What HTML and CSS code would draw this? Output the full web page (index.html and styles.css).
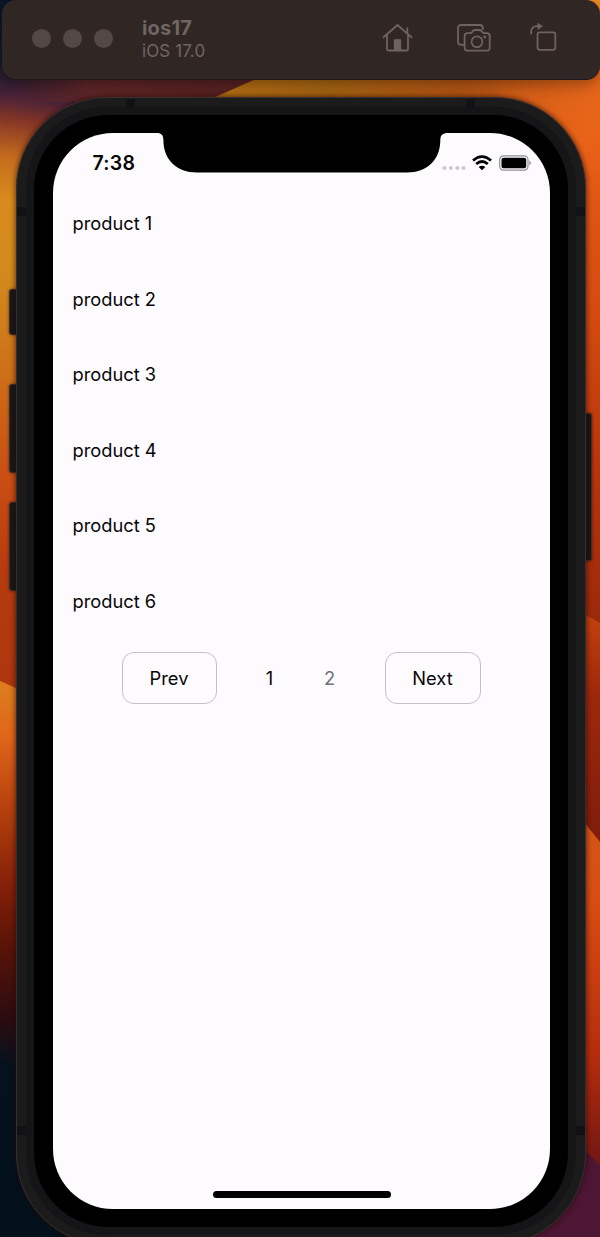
FILE: index.html
```html
<!DOCTYPE html>
<html lang="en">
<head>
<meta charset="utf-8">
<title>ios17</title>
<link rel="stylesheet" href="styles.css">
</head>
<body>
<div class="desktop">
  <svg class="wallpaper" viewBox="0 0 600 1237" preserveAspectRatio="none" aria-hidden="true">
    <defs>
      <linearGradient id="left" gradientUnits="userSpaceOnUse" x1="0" y1="0" x2="-90" y2="700">
        <stop offset="0" stop-color="#07162a"/><stop offset=".09" stop-color="#171b2c"/><stop offset=".13" stop-color="#42203a"/><stop offset=".165" stop-color="#833426"/><stop offset=".22" stop-color="#c56c1d"/><stop offset=".28" stop-color="#d98b1d"/><stop offset=".38" stop-color="#d38a1d"/><stop offset=".52" stop-color="#cd7018"/><stop offset=".67" stop-color="#ca4e14"/><stop offset=".8" stop-color="#b53b0e"/><stop offset="1" stop-color="#ad350f"/>
      </linearGradient>
      <linearGradient id="lower" gradientUnits="userSpaceOnUse" x1="0" y1="670" x2="0" y2="1237">
        <stop offset="0" stop-color="#dc831e"/><stop offset=".12" stop-color="#df651a"/><stop offset=".25" stop-color="#b43f0e"/><stop offset=".38" stop-color="#842008"/><stop offset=".5" stop-color="#551208"/><stop offset=".62" stop-color="#290c12"/><stop offset=".7" stop-color="#03121c"/><stop offset="1" stop-color="#02111c"/>
      </linearGradient>
      <linearGradient id="top" x1="0" y1="0" x2="1" y2="0">
        <stop offset="0" stop-color="#5e2526" stop-opacity="0"/><stop offset=".35" stop-color="#5e2526"/><stop offset="1" stop-color="#552020"/>
      </linearGradient>
      <linearGradient id="gold" x1="0" y1="0" x2="1" y2="0">
        <stop offset="0" stop-color="#b56f13"/><stop offset=".3" stop-color="#a66311"/><stop offset=".65" stop-color="#b35313"/><stop offset="1" stop-color="#e8661a"/>
      </linearGradient>
      <linearGradient id="right" gradientUnits="userSpaceOnUse" x1="0" y1="0" x2="0" y2="640">
        <stop offset="0" stop-color="#f08a20"/><stop offset=".13" stop-color="#e8661a" stop-opacity="0"/><stop offset=".22" stop-color="#e96217"/><stop offset=".34" stop-color="#dd5414"/><stop offset=".5" stop-color="#d34a10"/><stop offset=".72" stop-color="#b8360d"/><stop offset="1" stop-color="#98280b"/>
      </linearGradient>
      <linearGradient id="red" x1="0" y1="0" x2="0" y2="1">
        <stop offset="0" stop-color="#c4420e"/><stop offset=".35" stop-color="#9d280b"/><stop offset="1" stop-color="#7c1c0d"/>
      </linearGradient>
      <linearGradient id="ember" x1="0" y1="0" x2="0" y2="1">
        <stop offset="0" stop-color="#d45716"/><stop offset=".25" stop-color="#d84c12"/><stop offset=".7" stop-color="#b22b0d"/><stop offset="1" stop-color="#6e1714"/>
      </linearGradient>
    </defs>
    <path d="M0 0H300V720H0Z" fill="url(#left)"/>
    <path d="M0 79H260L210 102H0Z" fill="url(#top)"/>
    <path d="M0 681L18 689V1237H0Z" fill="url(#lower)"/>
    <path d="M256 79L400 0H600V230H300L213 98Z" fill="url(#gold)"/>
    <path d="M500 0H600V625L580 612V230H500Z" fill="url(#right)"/>
    <path d="M580 612L600 623V850L580 820Z" fill="url(#red)"/>
    <path d="M580 817L600 842V1167L580 1145Z" fill="url(#ember)"/>
    <path d="M580 1145L600 1166V1237H500Z" fill="#4d1634"/>
    <path d="M0 1100H200V1237H0Z" fill="#02111c"/>
  </svg>

  <header class="toolbar">
    <div class="lights"><i></i><i></i><i></i></div>
    <div class="device-name"><strong>ios17</strong><span>iOS 17.0</span></div>
    <nav class="tools">
      <svg width="32" height="30" viewBox="0 0 32 30">
        <path d="M1.500 14.300L15.500 2L29.500 14.300M5 12.200V26Q5 27.500 6.500 27.500H24.500Q26 27.500 26 26V12.200M25.300 9.500V5.200"/>
        <path class="solid" d="M12 27.500V17.200Q12 16.200 13 16.200H18Q19 16.200 19 17.200V27.500Z"/>
      </svg>
      <svg width="34" height="30" viewBox="0 0 34 30">
        <path d="M6.800 21.800H4Q1 21.800 1 18.800V5Q1 2 4 2H22.800Q25.800 2 25.800 5V6"/>
        <path d="M10.500 10.200H13.200Q14.500 10.200 15.200 9L16 7.800Q16.700 7 18 7H22.500Q23.800 7 24.500 7.800L25.300 9Q26 10.200 27.400 10.200H29.800Q32.700 10.200 32.700 13V24.700Q32.700 27.600 29.800 27.600H10.500Q7.600 27.600 7.600 24.700V13Q7.600 10.200 10.500 10.200Z"/>
        <circle cx="20" cy="18.700" r="5.400"/><circle class="solid" cx="27.700" cy="14" r="1.300"/>
      </svg>
      <svg width="28" height="30" viewBox="0 0 28 30">
        <path d="M1.200 10.500V9Q1.200 3.200 7 3.200H8"/>
        <path class="solid" d="M7.800 0L12.700 3.200L7.800 6.400Z"/>
        <rect x="7.500" y="9.300" width="17.800" height="17.500" rx="2.200"/>
      </svg>
    </nav>
  </header>

  <div class="phone">
    <b class="side mute"></b><b class="side volume-up"></b><b class="side volume-down"></b><b class="side power"></b>
    <div class="band">
      <i class="seam top-a"></i><i class="seam top-b"></i>
      <i class="seam left-a"></i><i class="seam left-b"></i><i class="seam right-a"></i><i class="seam right-b"></i>
      <div class="rim"><div class="bezel"><main class="screen">
        <svg class="notch" width="281" height="40" viewBox="0 0 281 40"><path d="M-4 0H286C280.500 0 278.500 2 278.300 7C278.300 27 265 39.500 245 39.500H35C15 39.500 1.400 27 1.400 7C1.200 2 -0.500 0 -5 0Z"/></svg>
        <div class="status">
          <time>7:38</time>
          <div class="signals">
            <svg width="25" height="6" viewBox="0 0 25 6" fill="#cbc9cd"><circle cx="2.500" cy="3" r="2.100"/><circle cx="8.900" cy="3" r="2.100"/><circle cx="15.300" cy="3" r="2.100"/><circle cx="21.500" cy="3" r="2.100"/></svg>
            <svg class="wifi" width="20" height="16" viewBox="0 0 20 16"><g fill="none" stroke="#000" stroke-width="2.700"><path d="M1 5.500Q10 -2.200 19 5.500"/><path d="M4.200 9Q10 4 15.800 9"/></g><path d="M6.700 12Q10 9.300 13.300 12L10 15.300Z"/></svg>
            <svg class="battery" width="32" height="16" viewBox="0 0 32 16"><rect x=".7" y=".8" width="28.300" height="14.400" rx="4" fill="none" stroke="#929093" stroke-width="1.200"/><rect x="2.500" y="2.700" width="24.700" height="10.600" rx="2"/><path d="M30.300 5.500Q31.900 6.300 31.900 8T30.300 10.500Z" fill="#929093"/></svg>
          </div>
        </div>
        <ul class="products">
          <li>product 1</li><li>product 2</li><li>product 3</li><li>product 4</li><li>product 5</li><li>product 6</li>
        </ul>
        <nav class="pager"><button>Prev</button><span>1</span><span class="muted">2</span><button class="next">Next</button></nav>
        <div class="home"></div>
      </main></div></div>
    </div>
  </div>
</div>
</body>
</html>
```
FILE: styles.css
```css
* { box-sizing: border-box; }
body { margin: 0; font-family: Inter, "Liberation Sans", sans-serif; }
.desktop { position: relative; width: 600px; height: 1237px; overflow: hidden; background: #02111c; }
.wallpaper { position: absolute; inset: 0; width: 100%; height: 100%; }
.toolbar { position: relative; display: flex; align-items: center; width: 598px; height: 80px; margin-left: 2px; padding: 0 42px 3px 30px; border-radius: 14px; background: #302623; border-bottom: 1px solid #1d1b20; box-shadow: 0 5px 14px rgba(0,0,0,.3); color: #706562; }
.lights { display: flex; gap: 12px; }
.lights i { width: 19px; height: 19px; border-radius: 50%; background: #544846; }
.device-name { display: flex; flex-direction: column; margin: 2px 0 0 29px; font-size: 17px; line-height: 22px; letter-spacing: .1px; }
.device-name strong { font-size: 20px; line-height: 23px; letter-spacing: .2px; }
.tools { display: flex; margin-left: auto; }
.tools svg { display: block; overflow: visible; fill: none; stroke: #70635f; stroke-width: 1.8; stroke-linecap: round; stroke-linejoin: round; }
.tools svg + svg { margin-left: 43px; }
.tools svg:last-child { margin-left: 39px; }
.tools .solid { fill: #70635f; stroke-width: .3; }
.phone { position: relative; width: 570px; height: 1148px; margin: 17px 0 0 16px; }
.band { position: relative; height: 100%; padding: 9px; border: 1px solid #343033; border-radius: 91px; background: #1c1b1c; box-shadow: 0 0 5px 1px rgba(40,8,0,.6); }
.rim { height: 100%; padding: 8px; border-radius: 81px; background: #151416; }
.bezel { height: 100%; padding: 18px 18px 18px 18.5px; border-radius: 74px; background: #000; }
.screen { position: relative; height: 100%; border-radius: 60px; overflow: hidden; background: #fdfbfe; color: #070608; }
.side { position: absolute; left: -7px; width: 10px; border: 1px solid #3a302b; border-radius: 3px; background: #181818; box-shadow: 0 0 3px rgba(50,15,0,.7); }
.mute { top: 192px; height: 46px; }
.volume-up { top: 287px; height: 89px; }
.volume-down { top: 405px; height: 89px; }
.power { top: 316px; left: auto; right: -6px; height: 148px; }
.seam { position: absolute; background: #121113; }
.top-a, .top-b { top: 1px; width: 9px; height: 9px; }
.top-a { left: 109px; }
.top-b { right: 110px; }
.left-a, .left-b, .right-a, .right-b { width: 9px; height: 9px; }
.left-a, .right-a { top: 109px; }
.left-b, .right-b { bottom: 109px; }
.left-a, .left-b { left: 0; }
.right-a, .right-b { right: 0; }
.notch { position: absolute; top: 0; left: 109px; overflow: visible; }
.status { display: flex; justify-content: space-between; height: 53px; padding: 17px 19px 0 40px; }
.status time { font-size: 19.500px; font-weight: 600; line-height: 26px; letter-spacing: .25px; }
.signals { display: flex; height: 26px; align-items: center; }
.signals svg:first-child { margin: 10px 5px 0 0; }
.wifi { margin: 0 7px 0 0; }
.products { margin: 0; padding: 0 20px; list-style: none; }
.products li { height: 75.600px; padding-top: 24px; font-size: 18.300px; line-height: 26px; }
.pager { display: flex; align-items: center; padding-left: 69px; margin-top: 12px; font-size: 18.300px; }
.pager button { width: 95px; height: 52px; padding: 0; border: 1.500px solid #c4c1c6; border-radius: 12px; background: transparent; color: #070608; font: inherit; }
.pager span { width: 60px; text-align: center; }
.pager > span:nth-child(2) { margin-left: 23px; }
.pager .muted { color: #727078; }
.pager .next { width: 96px; margin-left: 25px; }
.home { position: absolute; bottom: 11px; left: 160px; width: 178px; height: 7px; border-radius: 4px; background: #000; }
```
